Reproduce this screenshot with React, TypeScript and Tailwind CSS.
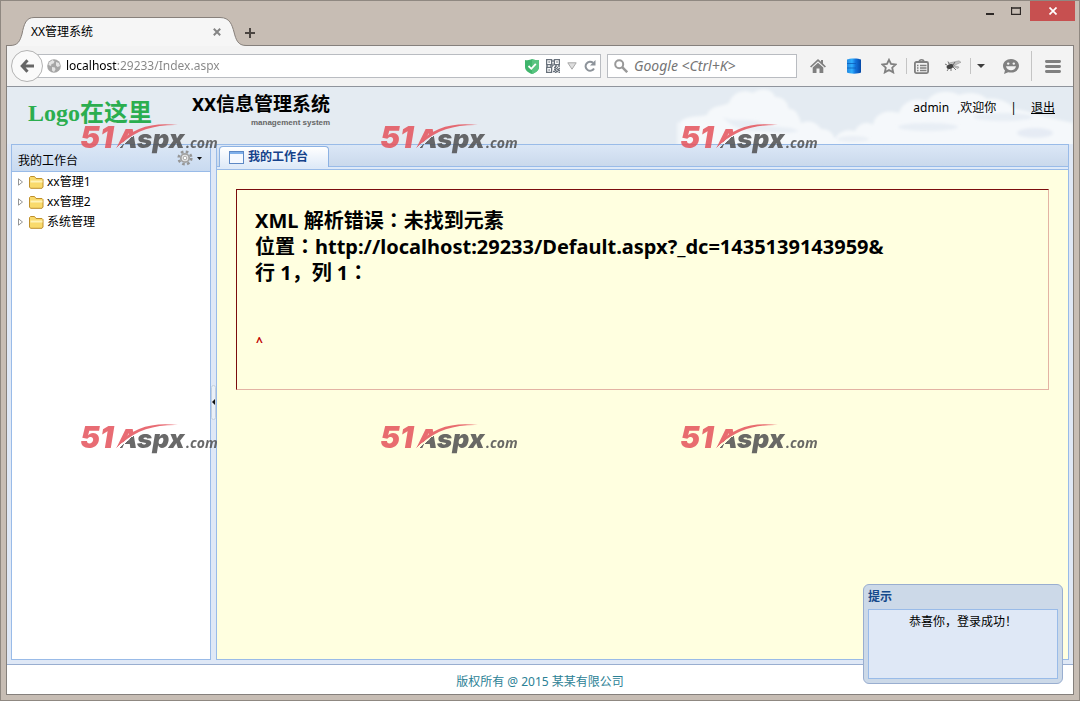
import React from "react";

const uiFont = "font-['Noto_Sans','Noto_Sans_CJK_SC',sans-serif]";

function Watermark({ className }: { className: string }) {
  return (
    <svg viewBox="-4 -10 152 50" className={`pointer-events-none absolute z-30 h-[50px] w-[152px] overflow-visible opacity-85 ${className}`}>
      <defs>
        <linearGradient id="brand" gradientUnits="userSpaceOnUse" x1="64" y1="31" x2="36" y2="-1">
          <stop offset=".47" stopColor="#4f4f50" />
          <stop offset=".47" stopColor="#4f4f50" stopOpacity="0" />
          <stop offset=".52" stopColor="#4f4f50" stopOpacity="0" />
          <stop offset=".52" stopColor="#e5535c" />
        </linearGradient>
      </defs>
      <g fontFamily="Inter" fontWeight="900" fontStyle="italic">
        <text x="0" y="26" fontSize="30" fill="#e5535c">51</text>
        <text x="37" y="26" fontSize="26" fill="url(#brand)">Aspx</text>
      </g>
      <path d="M39 22C52 5 74 0 98 3 75 2.500 57 8 42 21z" fill="#e5535c" />
      <text x="106" y="26" fontSize="14" fontFamily="Open Sans" fontWeight="700" fontStyle="italic" fill="#4f4f50">.com</text>
    </svg>
  );
}

function Clouds() {
  return (
    <svg viewBox="0 0 400 58" preserveAspectRatio="xMaxYMin slice" className="pointer-events-none absolute top-0 right-0 h-full w-[400px]">
      <defs>
        <filter id="soft" x="-10%" y="-30%" width="120%" height="160%">
          <feGaussianBlur stdDeviation="1.8" />
        </filter>
      </defs>
      <g fill="#f7f9fc" filter="url(#soft)">
        <path d="M8 34c8-6 18-4 26-6 4-10 14-8 22-12 4-12 16-14 24-10 8-6 20-4 22 4 10 0 12 6 14 12 8 0 10 8 12 14 10-4 16 0 20 6 8 0 12 4 14 10 4-8 12-10 20-8 4-8 12-10 18-6 2-12 14-16 26-12 4-12 16-16 28-12 6-10 22-12 32-6 10-4 22-2 28 4 12-2 22 4 28 10 10 2 20 4 30 8l28 6v26H8z" opacity=".9" />
        <path d="M4 36c12-6 26-4 34 2l-6 22H4z" opacity=".7" />
      </g>
      <g fill="#e2e9f2" filter="url(#soft)">
        <path d="M50 30c10 6 26 0 38 6s28 2 38 8c-14 4-30 0-44 0s-26-6-32-14z" opacity=".7" />
        <ellipse cx="255" cy="40" rx="30" ry="4" opacity=".7" />
        <ellipse cx="330" cy="30" rx="30" ry="4" opacity=".7" />
        <ellipse cx="180" cy="52" rx="16" ry="3" opacity=".6" />
        <ellipse cx="362" cy="46" rx="18" ry="5" opacity=".8" />
      </g>
    </svg>
  );
}

function TitleBar() {
  return (
    <div className="relative flex h-11 items-end">
      <div className="relative z-10 -mb-px ml-[5px] flex h-[29px] w-[240px] items-center pr-[21px] pl-[25px]">
        <svg viewBox="0 0 240 29" className="absolute inset-0 h-full w-full">
          <path d="M0 28.500H4C12 28.500 14 24 16 17C18 7 20 .5 28 .5H214C224 .5 226 8 228 15C230 23 232 28.500 240 28.500V29H0z" fill="#f6f6f6" />
          <path d="M0 28.500H4C12 28.500 14 24 16 17C18 7 20 .5 28 .5H214C224 .5 226 8 228 15C230 23 232 28.500 240 28.500" fill="none" stroke="#87807b" />
        </svg>
        <span className="relative flex-1 text-xs">XX管理系统</span>
        <button aria-label="关闭标签页" className="relative flex size-4 items-center justify-center">
          <svg viewBox="0 0 8 8" className="size-2"><path d="M.8.8l6.400 6.400M7.200.8L.8 7.200" stroke="#858585" strokeWidth="2" /></svg>
        </button>
      </div>
      <button aria-label="新标签页" className="-ml-1 mb-1 flex size-4 items-center justify-center">
        <svg viewBox="0 0 10 10" className="size-2.5"><path d="M5 0v10M0 5h10" stroke="#4b4541" strokeWidth="2" /></svg>
      </button>
      <div className="mr-1 ml-auto flex h-5 self-start">
        <button aria-label="最小化" className="flex w-6 items-center justify-center">
          <svg viewBox="0 0 8 8" className="size-2"><path d="M0 7h8" stroke="#2d2826" strokeWidth="2" /></svg>
        </button>
        <button aria-label="最大化" className="flex w-7 items-center justify-center">
          <svg viewBox="0 0 10 8" className="h-2 w-2.5"><path d="M0 1h10M.5 0v8M9.500 0v8M0 7.500h10" stroke="#2d2826" fill="none" strokeWidth="1.300" /></svg>
        </button>
        <button aria-label="关闭" className="flex w-[45px] items-center justify-center bg-[#c75050]">
          <svg viewBox="0 0 8 8" className="size-2"><path d="M.5.5l7 7M7.500.5l-7 7" stroke="#fff" strokeWidth="1.700" /></svg>
        </button>
      </div>
    </div>
  );
}

function QrIcon() {
  return (
    <svg viewBox="0 0 14 14" className="size-3.5" fill="none" stroke="#68717b" strokeWidth="1.300">
      <path d="M.6.6h5v5h-5zM8.400.6h5v5h-5zM.6 8.400h5v5h-5zM2.500 3h1.200M10.400 3h1.200M2.500 11h1.200" />
      <path d="M7 1v2M7 4.500V7M0 7h2M4 7h3M9 7h2M12 7h2M8 8.500h2M11 8.500h1M9.500 9.500h1.500M12.500 9.500H14M8 10.500h2M11 10.500h2M9 11.500h1.500M12 11.500h2M7 12.500h2M10 12.500h2M9 13.400h1.500M12.500 13.400H14" />
    </svg>
  );
}

function Toolbar() {
  return (
    <div className="flex h-[41px] items-center border-b border-[#8f949c] bg-[#f3f3f3]">
      <button aria-label="后退" className="relative z-10 ml-1 flex size-8 shrink-0 items-center justify-center rounded-full border border-[#b3b3b3] bg-[#fafafa]">
        <svg viewBox="0 0 14 14" className="size-3.5" fill="none" stroke="#666" strokeWidth="3"><path d="M7.500 1.200L2.200 7l5.300 5.800M2.500 7H14" /></svg>
      </button>
      <div className="-ml-2 flex h-6 min-w-0 flex-1 items-center border border-[#b9bcc1] bg-white pr-1 pl-[11px]">
        <svg viewBox="0 0 14 14" className="mr-[5px] size-3.5 shrink-0">
          <circle cx="7" cy="7" r="6.800" fill="#a5a5a5" />
          <path d="M2 3.500L5.500 1l2 1.500-1 2-2 .5-.5 2L1.500 6zM9 3l3 1 1 3-2.500 1L9 6.500zM5 8l3 .5.5 2L7 13l-2-1.500z" fill="#e3e3e3" />
        </svg>
        <input
          aria-label="地址"
          defaultValue="localhost:29233/Index.aspx"
          className="min-w-0 flex-1 bg-[linear-gradient(to_right,#000_51px,#858585_51px)] bg-clip-text text-xs leading-5 text-transparent caret-black outline-none"
        />
        <div className="flex items-center gap-[7px]">
          <svg viewBox="0 0 14 15" className="h-[15px] w-3.5">
            <path d="M0 1C3 1.500 5 1 7 0c2 1 4 1.500 7 1V8c0 3.500-3 5.500-7 7-4-1.500-7-3.500-7-7z" fill="#3fb56c" />
            <path d="M7 0c2 1 4 1.500 7 1V8c0 3.500-3 5.500-7 7z" fill="#58c480" />
            <path d="M3.500 7l2.800 2.800L10.800 4.800" fill="none" stroke="#fff" strokeWidth="1.800" />
          </svg>
          <QrIcon />
          <svg viewBox="0 0 10 8" className="h-2 w-2.5"><path d="M.8 .8h8.400L5 7.200z" fill="#dedede" stroke="#a9a9a9" /></svg>
          <button aria-label="刷新">
            <svg viewBox="0 0 12 12" className="size-3" fill="none">
              <path d="M10 8.500A4.500 4.500 0 1 1 9 2.800" stroke="#8d939a" strokeWidth="2" />
              <path d="M11.500 0v5.500H6z" fill="#8d939a" />
            </svg>
          </button>
        </div>
      </div>
      <label className="mr-[3px] ml-1.5 flex h-6 w-[190px] shrink items-center border border-[#b9bcc1] bg-white pl-1.5">
        <svg viewBox="0 0 14 14" className="mr-1.5 size-3.5 shrink-0" fill="none" stroke="#999">
          <circle cx="5.200" cy="5.200" r="4" strokeWidth="2" /><path d="M8.200 8.200l5 5" strokeWidth="2.500" />
        </svg>
        <input aria-label="搜索" placeholder="Google <Ctrl+K>" className="w-full min-w-0 text-sm italic outline-none placeholder:text-[#757575]" />
      </label>
      <div className="flex h-full shrink-0 items-center text-[#808080]">
        <button aria-label="主页" className="flex w-9 justify-center">
          <svg viewBox="0 0 16 16" className="size-4" fill="currentColor"><path d="M8 1L0 8.500l1.200 1L8 3.300l6.800 6.200 1.200-1-3-2.900V2h-2v1.800zM8 4.800l-5.300 4.700V15h3.800v-4.500h3V15h3.800V9.500z" /></svg>
        </button>
        <button aria-label="数据" className="flex w-9 justify-center">
          <svg viewBox="0 0 14 16" className="h-4 w-3.5">
            <defs><linearGradient id="db" x1="0" x2="1"><stop offset="0" stopColor="#2488e0" /><stop offset=".35" stopColor="#2fb0ff" /><stop offset=".6" stopColor="#1273dc" /><stop offset="1" stopColor="#0648a6" /></linearGradient></defs>
            <path d="M0 1.500c2-1.500 12-1.500 14 0v13c-2 1.500-12 1.500-14 0z" fill="url(#db)" />
            <path d="M0 5.500h9M0 10h9" stroke="#0c5db8" strokeWidth=".8" />
          </svg>
        </button>
        <button aria-label="收藏" className="flex w-[34px] justify-center">
          <svg viewBox="0 0 16 16" className="size-4" fill="none" stroke="currentColor" strokeWidth="1.800"><path d="M8 1.800l2 4.200 4.700.5-3.500 3.200 1 4.700L8 12l-4.200 2.400 1-4.700L1.300 6.500 6 6z" /></svg>
        </button>
        <span className="h-4 w-px bg-[#c4c4c4]" />
        <button aria-label="书签" className="flex w-[29px] justify-center">
          <svg viewBox="0 0 15 15" className="size-[15px]" fill="none" stroke="currentColor" strokeWidth="1.800"><rect x=".9" y="3" width="13.200" height="11.100" rx="1.500" /><path d="M5 3c0-3 5-3 5 0M3 6.500h1.500M6 6.500h6.500M3 9h1.500M6 9h6.500M3 11.500h1.500M6 11.500h6.500" strokeWidth="1.400" /></svg>
        </button>
        <button aria-label="调试" className="flex w-[34px] justify-center">
          <svg viewBox="0 0 16 12" className="h-3 w-4" fill="none">
            <path d="M4 3L14 .8l2 1.500L9 5.500l5 1.500-1 1.500L7 6z" fill="#c2c2c2" stroke="#8d8d8d" strokeWidth=".5" />
            <ellipse cx="5" cy="6.500" rx="3.500" ry="2.300" transform="rotate(-20 5 6.500)" fill="#444" />
            <path d="M2 5L0 4M4 8l-2 3M6 8v3M8 7l3 3M4 4L3 1.500M8 5l2-3" stroke="#555" strokeWidth=".8" />
          </svg>
        </button>
        <span className="h-4 w-px bg-[#c4c4c4]" />
        <button aria-label="更多" className="flex w-5 justify-center">
          <svg viewBox="0 0 8 4" className="h-1 w-2"><path d="M0 0h8L4 4z" fill="#3c3c3c" /></svg>
        </button>
        <button aria-label="聊天" className="flex w-10 justify-center">
          <svg viewBox="0 0 16 15" className="h-[15px] w-4"><path d="M8 0c4.500 0 8 3 8 6.800s-3.500 6.800-8 6.800c-1 0-2-.1-2.800-.4L1 15l1-3.500C.7 10.200 0 8.600 0 6.800 0 3 3.500 0 8 0z" fill="currentColor" /><circle cx="5.200" cy="4.600" r="1.200" fill="#f3f3f3" /><circle cx="10.800" cy="4.600" r="1.200" fill="#f3f3f3" /><path d="M3 7.300h10c-.5 2.500-2.500 4-5 4s-4.500-1.500-5-4z" fill="#f3f3f3" /></svg>
        </button>
        <span className="h-[30px] w-px bg-[#c4c4c4]" />
        <button aria-label="菜单" className="flex w-[41px] justify-center">
          <svg viewBox="0 0 16 13" className="h-[13px] w-4" stroke="currentColor" strokeWidth="2.800" strokeLinecap="round"><path d="M1.400 1.500h13.200M1.400 6.500h13.200M1.400 11.500h13.200" /></svg>
        </button>
      </div>
    </div>
  );
}

function PageHeader() {
  return (
    <header className="relative flex h-[57px] shrink-0 justify-between bg-[#e4ebf2]">
      <Clouds />
      <div className="relative flex pl-[21px]">
        <div className="w-[164px] pt-2.5 font-['Liberation_Serif','Noto_Sans_CJK_SC',serif] text-2xl leading-8 font-bold text-[#2bae4f]">Logo在这里</div>
        <div className="pt-1.5 text-right">
          <h1 className="font-['Roboto','Noto_Sans_CJK_SC',sans-serif] text-[19px] leading-6 font-bold text-black">XX信息管理系统</h1>
          <p className="font-['Liberation_Sans',sans-serif] text-[8px] leading-3 font-bold text-[#666]">management system</p>
        </div>
      </div>
      <div className="relative flex gap-3.5 pt-3 pr-[18px] text-xs leading-[18px]">
        <span className="flex gap-2"><span>admin</span><span>,欢迎你</span></span>
        <span>|</span>
        <a href="#logout" className="underline">退出</a>
      </div>
    </header>
  );
}

function Sidebar() {
  return (
    <aside className="flex w-[200px] shrink-0 flex-col border border-[#99bbe8] bg-white text-xs">
      <div className="flex h-[27px] items-center justify-between border-b border-[#99bbe8] bg-linear-to-b from-[#dbe7f6] to-[#c9daf0] pr-2 pl-1.5">
        <h2 className="pt-1.5">我的工作台</h2>
        <button aria-label="设置" className="flex items-center gap-1">
          <svg viewBox="0 0 16 16" className="size-4">
            <circle cx="8" cy="8" r="6.300" fill="none" stroke="#969696" strokeWidth="2.600" strokeDasharray="2.600 2.350" />
            <circle cx="8" cy="8" r="4.200" fill="#e6e6e6" stroke="#a2a2a2" strokeWidth="1.800" />
            <circle cx="8" cy="8" r="1.800" fill="#fff" stroke="#aaa" />
          </svg>
          <svg viewBox="0 0 5 3" className="h-[3px] w-[5px]"><path d="M0 0h5L2.500 3z" fill="#111" /></svg>
        </button>
      </div>
      <ul>
        {["xx管理1", "xx管理2", "系统管理"].map((name) => (
          <li key={name}>
            <button className="flex h-5 w-full items-center pl-1.5">
              <svg viewBox="0 0 5 8" className="h-2 w-[5px]"><path d="M.5 .8L4.500 4 .5 7.200z" fill="#fff" stroke="#8a8a8a" strokeWidth=".9" /></svg>
              <svg viewBox="0 0 15 13" className="mr-[3px] ml-1.5 h-[13px] w-[15px]">
                <path d="M.5 11V1.500l1-1h4l1.500 2h6l1 1V11l-1 1.300h-11.500z" fill="#f9da6c" stroke="#bf8f2c" />
                <path d="M1.500 4.500h12v2h-12z" fill="#fff3b8" />
              </svg>
              {name}
            </button>
          </li>
        ))}
      </ul>
    </aside>
  );
}

function Colon() {
  return <span className="font-['Noto_Sans_CJK_JP',sans-serif] leading-none">：</span>;
}

function Workspace() {
  return (
    <main className="flex min-w-0 flex-1 flex-col border border-[#99bbe8] bg-[#ffffe0]">
      <div className="flex h-[25px] shrink-0 flex-col bg-[#dfeaf8]">
        <div role="tablist" className="flex h-[22px] items-end border-b border-[#99bbe8] bg-linear-to-b from-[#dbe7f6] to-[#cad9ec] pl-0.5">
          <button role="tab" aria-selected="true" className="-mb-px flex h-[21px] w-[110px] items-center gap-1 rounded-t border border-b-0 border-[#8db2e3] bg-linear-to-b from-white to-[#dfeaf8] pl-[9px] text-xs font-bold text-[#15428b]">
            <svg viewBox="0 0 15 13" className="h-[13px] w-[15px]"><rect x=".5" y=".5" width="14" height="12" fill="#f5f9ff" stroke="#5c88c5" /><path d="M1 2h13" stroke="#7fb0ea" strokeWidth="2" /></svg>
            我的工作台
          </button>
        </div>
        <div className="flex-1 border-b border-[#99bbe8]" />
      </div>
      <section className="m-[19px] h-[201px] border border-t-[#7b0d0d] border-r-[#e3b3a4] border-b-[#e3b3a4] border-l-[#7b0d0d] px-[18px] pt-[18px]">
        <div className="text-xl leading-[26px] font-bold text-black">
          <p>XML 解析错误<Colon />未找到元素</p>
          <p className="break-words">位置<Colon />http://localhost:29233/Default.aspx?_dc=1435139143959&amp;</p>
          <p>行 1，列 1<Colon /></p>
        </div>
        <p className="mt-[48px] pl-px text-xs leading-4 font-bold text-[#c00000]">^</p>
      </section>
    </main>
  );
}

function LoginNotice() {
  return (
    <div role="status" className="absolute right-4 bottom-4 z-20 flex h-[100px] w-[200px] flex-col rounded-md border border-[#99aed0] bg-[#ccd9e8] px-1 pb-1 text-xs">
      <h2 className="h-6 leading-6 font-bold text-[#15498b]">提示</h2>
      <p className="flex-1 border border-[#99bbe8] bg-[#dfe8f6] pt-1 text-center leading-4 text-black">恭喜你，登录成功！</p>
    </div>
  );
}

export default function App() {
  return (
    <div className={`relative flex min-h-screen flex-col border border-[#8f8881] bg-[#c7bdb4] text-black ${uiFont}`}>
      <TitleBar />
      <div className="mx-[5px] mb-[5px] flex flex-1 flex-col border border-[#85807c]">
        <Toolbar />
        <div className="flex flex-1 flex-col bg-[#dfe8f6]">
          <PageHeader />
          <div className="flex flex-1 px-1 pb-1">
            <Sidebar />
            <div className="flex w-[5px] shrink-0 items-center">
              <button aria-label="收起" className="flex h-[35px] w-[5px] items-center rounded-sm border border-[#c4d0de] bg-[#eaf0f8]">
                <svg viewBox="0 0 3 6" className="h-1.5 w-[3px]"><path d="M3 0v6L0 3z" fill="#111" /></svg>
              </button>
            </div>
            <Workspace />
          </div>
          <footer className="flex h-[30px] items-center justify-center border-t border-[#99aed0] bg-white pt-1 text-xs text-[#2b8195]">版权所有 @ 2015 某某有限公司</footer>
        </div>
      </div>
      <LoginNotice />
      <Watermark className="top-[111px] left-[75px]" />
      <Watermark className="top-[111px] left-[375px]" />
      <Watermark className="top-[111px] left-[675px]" />
      <Watermark className="top-[411px] left-[75px]" />
      <Watermark className="top-[411px] left-[375px]" />
      <Watermark className="top-[411px] left-[675px]" />
    </div>
  );
}
